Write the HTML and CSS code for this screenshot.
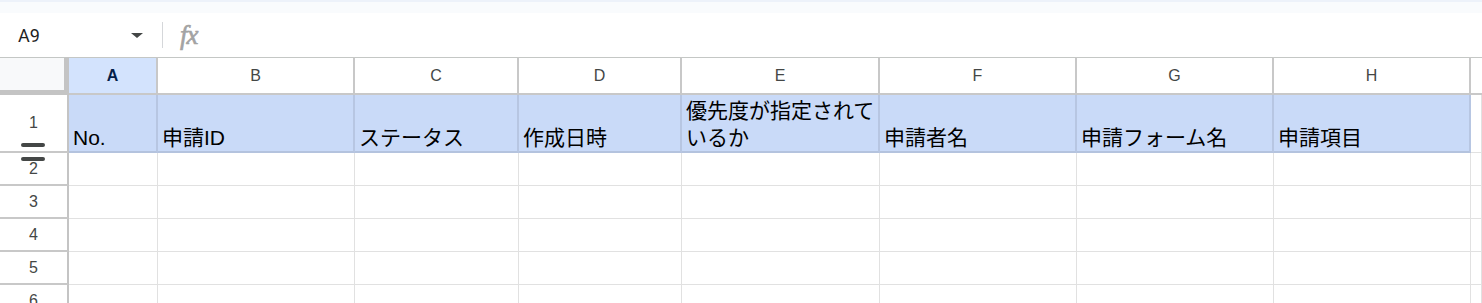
FILE: index.html
```html
<!DOCTYPE html>
<html lang="ja">
<head>
  <meta charset="UTF-8" />
  <title>Sheet</title>
  <link rel="stylesheet" href="styles.css">
</head>
<body>
  <div class="top-strip"></div>

  <div class="formula-bar">
    <div class="name-box">
      <span class="cell-ref">A9</span>
      <span class="caret"></span>
    </div>
    <div class="divider"></div>
    <span class="fx">fx</span>
  </div>

  <div class="sheet">
    <!-- column headers -->
    <div class="corner"></div>
    <div class="col-head active">A</div>
    <div class="col-head">B</div>
    <div class="col-head">C</div>
    <div class="col-head">D</div>
    <div class="col-head">E</div>
    <div class="col-head">F</div>
    <div class="col-head">G</div>
    <div class="col-head">H</div>
    <div class="col-head last"></div>

    <!-- row 1 -->
    <div class="row-head first">1
      <span class="handle top"></span>
      <span class="handle bottom"></span>
    </div>
    <div class="cell filled">No.</div>
    <div class="cell filled">申請ID</div>
    <div class="cell filled">ステータス</div>
    <div class="cell filled">作成日時</div>
    <div class="cell filled">優先度が指定されているか</div>
    <div class="cell filled">申請者名</div>
    <div class="cell filled">申請フォーム名</div>
    <div class="cell filled">申請項目</div>
    <div class="cell"></div>

    <div class="row-head">2</div>
    <div class="cell"></div><div class="cell"></div><div class="cell"></div><div class="cell"></div><div class="cell"></div><div class="cell"></div><div class="cell"></div><div class="cell"></div><div class="cell"></div>

    <div class="row-head">3</div>
    <div class="cell"></div><div class="cell"></div><div class="cell"></div><div class="cell"></div><div class="cell"></div><div class="cell"></div><div class="cell"></div><div class="cell"></div><div class="cell"></div>

    <div class="row-head">4</div>
    <div class="cell"></div><div class="cell"></div><div class="cell"></div><div class="cell"></div><div class="cell"></div><div class="cell"></div><div class="cell"></div><div class="cell"></div><div class="cell"></div>

    <div class="row-head">5</div>
    <div class="cell"></div><div class="cell"></div><div class="cell"></div><div class="cell"></div><div class="cell"></div><div class="cell"></div><div class="cell"></div><div class="cell"></div><div class="cell"></div>

    <div class="row-head">6</div>
    <div class="cell"></div><div class="cell"></div><div class="cell"></div><div class="cell"></div><div class="cell"></div><div class="cell"></div><div class="cell"></div><div class="cell"></div><div class="cell"></div>
  </div>
</body>
</html>
```

FILE: styles.css
```css
body {
  margin: 0;
  height: 303px;
  overflow: hidden;
  background: #fff;
  font-family: "Liberation Sans", "Noto Sans CJK JP", sans-serif;
  color: #000;
}

.top-strip {
  height: 13px;
  box-sizing: border-box;
  background: #f9fbfd;
  border-top: 2px solid #edf2fa;
}

/* formula bar */
.formula-bar {
  height: 44px;
  display: flex;
  align-items: center;
}

.name-box {
  width: 162px;
  box-sizing: border-box;
  padding: 0 19px 0 18px;
  display: flex;
  align-items: center;
  justify-content: space-between;
}

.cell-ref {
  font-family: Roboto, sans-serif;
  font-size: 18px;
  color: #1f1f1f;
}

.caret {
  width: 0;
  height: 0;
  border-left: 6px solid transparent;
  border-right: 6px solid transparent;
  border-top: 5px solid #444746;
}

.divider {
  width: 1px;
  height: 26px;
  background: #d5d7da;
}

.fx {
  margin-left: 17px;
  font-family: "Liberation Serif", serif;
  font-style: italic;
  font-size: 27px;
  letter-spacing: -1px;
  color: #a3a3a3;
  -webkit-text-stroke: 0.6px #a3a3a3;
}

/* grid */
.sheet {
  display: grid;
  grid-template-columns: 69px 89px 197px 164px 163px 198px 197px 197px 197px 1fr;
  grid-template-rows: 38px 58px repeat(5, 33px);
}

.sheet > div {
  box-sizing: border-box;
  position: relative;
}

.corner {
  background: #f8f9fa;
  border-top: 1px solid #c4c7c5;
  border-right: 5px solid #c4c4c4;
  border-bottom: 5px solid #c4c4c4;
}

.col-head {
  border-top: 1px solid #c4c7c5;
  border-right: 2px solid #c8c8c8;
  border-bottom: 2px solid #c8c8c8;
  display: flex;
  align-items: center;
  justify-content: center;
  font-size: 16px;
  color: #444746;
}

.col-head.active {
  background: #d3e3fd;
  color: #041e49;
  font-weight: bold;
}

.col-head.last {
  border-right: none;
}

.row-head {
  border-right: 2px solid #c4c4c4;
  border-bottom: 2px solid #c8c8c8;
  display: flex;
  align-items: center;
  justify-content: center;
  font-size: 16px;
  color: #444746;
}

.row-head.first {
  align-items: flex-start;
  padding-top: 19px;
}

.handle {
  position: absolute;
  left: 21px;
  width: 24px;
  height: 4px;
  border-radius: 2px;
  background: #444746;
  z-index: 2;
}

.handle.top {
  top: 48px;
}

.handle.bottom {
  top: 62px;
}

.cell {
  border-right: 1px solid #e1e1e1;
  border-bottom: 1px solid #e1e1e1;
}

.cell.filled {
  background: #c9daf8;
  border-right: 2px solid #b7c6e2;
  border-bottom: 2px solid #b4c3de;
  display: flex;
  align-items: flex-end;
  padding: 0 3px 0 4px;
  font-size: 21px;
  line-height: 27px;
}
```
